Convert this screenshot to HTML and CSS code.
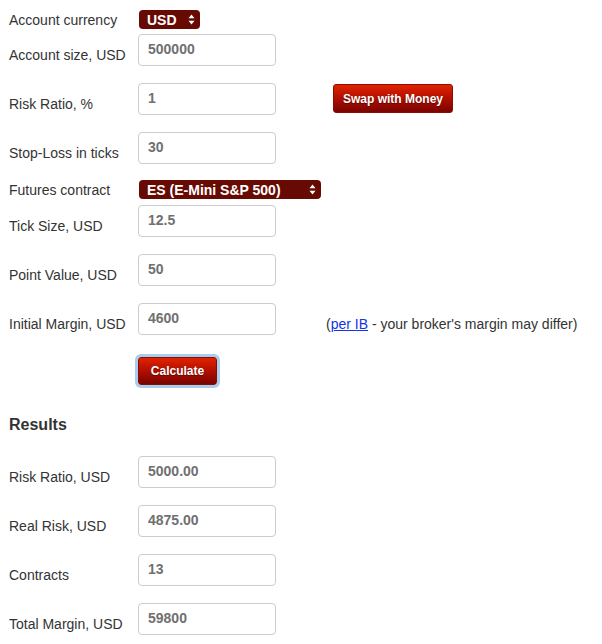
FILE: index.html
```html
<!DOCTYPE html>
<html>
<head>
<meta charset="utf-8">
<link rel="stylesheet" href="styles.css">
</head>
<body>
<form class="calc">
  <div class="row sel-row first">
    <label class="lbl">Account currency</label>
    <div class="select sel-usd"><span>USD</span>
      <svg class="arrows" width="7" height="11" viewBox="0 0 7 11"><path d="M3.5 0.5 L6.5 4.2 L0.5 4.2 Z M0.5 6.8 L6.5 6.8 L3.5 10.5 Z" fill="#fff"/></svg>
    </div>
  </div>
  <div class="row in-row r-acc">
    <label class="lbl">Account size, USD</label>
    <input class="field" type="text" value="500000">
  </div>
  <div class="row in-row">
    <label class="lbl">Risk Ratio, %</label>
    <input class="field" type="text" value="1">
    <button type="button" class="btn btn-swap">Swap with Money</button>
  </div>
  <div class="row in-row">
    <label class="lbl">Stop-Loss in ticks</label>
    <input class="field" type="text" value="30">
  </div>
  <div class="row sel-row r-fut">
    <label class="lbl">Futures contract</label>
    <div class="select sel-fut"><span>ES (E-Mini S&amp;P 500)</span>
      <svg class="arrows" width="7" height="11" viewBox="0 0 7 11"><path d="M3.5 0.5 L6.5 4.2 L0.5 4.2 Z M0.5 6.8 L6.5 6.8 L3.5 10.5 Z" fill="#fff"/></svg>
    </div>
  </div>
  <div class="row in-row r-tick">
    <label class="lbl">Tick Size, USD</label>
    <input class="field" type="text" value="12.5">
  </div>
  <div class="row in-row">
    <label class="lbl">Point Value, USD</label>
    <input class="field" type="text" value="50">
  </div>
  <div class="row in-row">
    <label class="lbl">Initial Margin, USD</label>
    <input class="field" type="text" value="4600">
    <span class="note">(<a href="#">per IB</a> - your broker's margin may differ)</span>
  </div>
  <div class="row btn-row">
    <span class="lbl"></span>
    <button type="button" class="btn btn-calc">Calculate</button>
  </div>
  <h3 class="results">Results</h3>
  <div class="row in-row r-res">
    <label class="lbl">Risk Ratio, USD</label>
    <input class="field" type="text" value="5000.00">
  </div>
  <div class="row in-row">
    <label class="lbl">Real Risk, USD</label>
    <input class="field" type="text" value="4875.00">
  </div>
  <div class="row in-row">
    <label class="lbl">Contracts</label>
    <input class="field" type="text" value="13">
  </div>
  <div class="row in-row">
    <label class="lbl">Total Margin, USD</label>
    <input class="field" type="text" value="59800">
  </div>
</form>
</body>
</html>
```
FILE: styles.css
```css
html, body {
  margin: 0;
  padding: 0;
  background: #fff;
}
body {
  font-family: "Liberation Sans", Arial, sans-serif;
  font-size: 14px;
  color: #333;
}
.calc {
  padding: 10px 0 0 9px;
  display: flex;
  flex-direction: column;
}
.row {
  display: flex;
}
.lbl {
  width: 129px;
  flex: none;
  line-height: 16px;
}
.sel-row {
  height: 19px;
  align-items: center;
}
.in-row {
  height: 32px;
  align-items: flex-end;
  margin-top: 17px;
}
.in-row .lbl {
  padding-bottom: 3px;
}
.r-acc { margin-top: 5px; }
.r-fut { margin-top: 16px; }
.r-tick { margin-top: 6px; }
.r-res { margin-top: 22px; }
.select {
  margin-left: 1px;
  height: 19px;
  box-sizing: border-box;
  background: #680a04;
  border-radius: 4px;
  color: #fff;
  font-weight: bold;
  font-size: 14px;
  display: flex;
  align-items: center;
  justify-content: space-between;
  padding: 0 5px 0 8px;
}
.sel-usd { width: 61px; }
.sel-fut { width: 182px; }
.arrows { flex: none; }
.field {
  width: 138px;
  height: 32px;
  box-sizing: border-box;
  margin: 0;
  border: 1px solid #ccc;
  border-radius: 4px;
  padding: 0 0 2px 9px;
  font-family: "Liberation Sans", Arial, sans-serif;
  font-size: 14px;
  font-weight: bold;
  color: #707070;
  background: #fff;
  align-self: flex-start;
}
.btn {
  font-family: "Liberation Sans", Arial, sans-serif;
  font-size: 12px;
  font-weight: bold;
  color: #fff;
  text-shadow: 0 1px 1px rgba(60, 0, 0, 0.6);
  border: 1px solid #8a0d00;
  border-radius: 3px;
  background: linear-gradient(to bottom, #e02400 0%, #b51000 45%, #7a0300 100%);
  padding: 0;
  cursor: pointer;
}
.btn-swap {
  align-self: flex-start;
  margin: 1px 0 0 57px;
  width: 120px;
  height: 29px;
}
.note {
  margin-left: 50px;
  padding-bottom: 3px;
  line-height: 16px;
  white-space: nowrap;
}
.note a {
  color: #1133ee;
  text-decoration: underline;
}
.btn-row {
  margin-top: 22px;
}
.btn-calc {
  width: 79px;
  height: 28px;
  box-shadow: 0 0 0 3px #a7cdf0;
}
.results {
  margin: 31px 0 0 0;
  font-size: 16px;
  line-height: 18px;
  font-weight: bold;
  color: #333;
}
```
